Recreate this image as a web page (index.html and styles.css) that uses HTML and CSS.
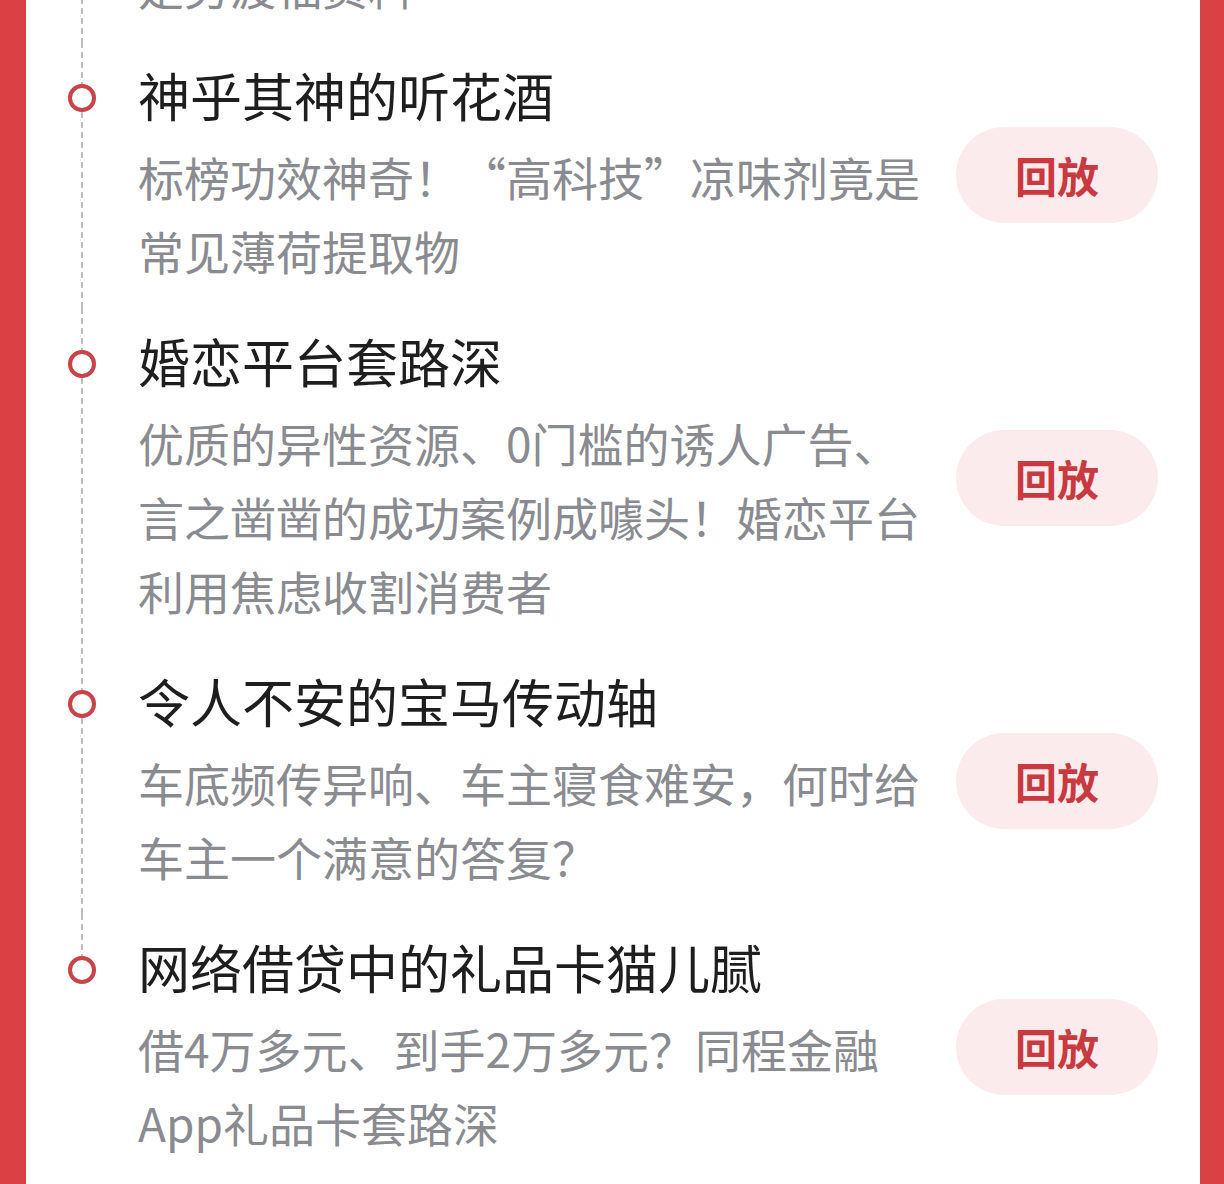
FILE: index.html
```html
<!DOCTYPE html>
<html lang="zh-CN">
<head>
<meta charset="utf-8">
<title>回放列表</title>
<link rel="stylesheet" href="styles.css">
</head>
<body>
<div class="card">
  <div class="list">
    <div class="item tail">
      <div class="rail"><span class="seg grow"></span></div>
      <div class="main">
        <div class="desc">是劳渡福资料</div>
      </div>
    </div>

    <div class="item">
      <div class="rail"><span class="seg top"></span><span class="dot"></span><span class="seg grow"></span></div>
      <div class="main">
        <div class="title">神乎其神的听花酒</div>
        <div class="desc">标榜功效神奇！“高科技”凉味剂竟是常见薄荷提取物</div>
      </div>
      <button class="replay">回放</button>
    </div>

    <div class="item">
      <div class="rail"><span class="seg top"></span><span class="dot"></span><span class="seg grow"></span></div>
      <div class="main">
        <div class="title">婚恋平台套路深</div>
        <div class="desc">优质的异性资源、0门槛的诱人广告、言之凿凿的成功案例成噱头！婚恋平台利用焦虑收割消费者</div>
      </div>
      <button class="replay">回放</button>
    </div>

    <div class="item">
      <div class="rail"><span class="seg top"></span><span class="dot"></span><span class="seg grow"></span></div>
      <div class="main">
        <div class="title">令人不安的宝马传动轴</div>
        <div class="desc">车底频传异响、车主寝食难安，何时给车主一个满意的答复？</div>
      </div>
      <button class="replay">回放</button>
    </div>

    <div class="item last">
      <div class="rail"><span class="seg top"></span><span class="dot"></span><span class="seg grow"></span></div>
      <div class="main">
        <div class="title">网络借贷中的礼品卡猫儿腻</div>
        <div class="desc">借4万多元、到手2万多元？同程金融App礼品卡套路深</div>
      </div>
      <button class="replay">回放</button>
    </div>
  </div>
</div>
</body>
</html>
```

FILE: styles.css
```css
html, body {
  height: 100%;
}
body {
  margin: 0;
  background: #d94145;
  font-family: "Noto Sans CJK SC", "Noto Sans", sans-serif;
  overflow: hidden;
}
.card {
  margin: 0 24px 0 26px;
  height: 100%;
  background: #ffffff;
  overflow: hidden;
}
.list {
  display: flex;
  flex-direction: column;
  margin-top: -52px;
}
.item {
  display: flex;
  align-items: center;
}
.rail {
  width: 112px;
  flex: none;
  align-self: stretch;
  display: flex;
  flex-direction: column;
  align-items: center;
}
.seg {
  width: 2px;
  background: repeating-linear-gradient(to bottom, #bdbdbd 0 6px, transparent 6px 10px);
}
.seg.top {
  height: 42px;
  flex: none;
}
.seg.grow {
  flex: 1;
}
.last .seg.grow {
  visibility: hidden;
}
.dot {
  width: 28px;
  height: 28px;
  box-sizing: border-box;
  border: 4px solid #c8434a;
  border-radius: 50%;
  background: #fff;
  flex: none;
}
.main {
  width: 792px;
  flex: none;
  padding: 21px 0 21px;
}
.tail .main {
  padding: 0 0 20px;
}
.title {
  font-size: 52px;
  line-height: 64px;
  color: #1e1e1e;
  margin-bottom: 12px;
}
.desc {
  font-size: 46px;
  line-height: 74px;
  color: #8a8b90;
}
.replay {
  flex: none;
  margin-left: 26px;
  width: 202px;
  height: 96px;
  border: none;
  border-radius: 48px;
  background: #fbebec;
  color: #c93a40;
  font-family: "Noto Sans CJK SC", sans-serif;
  font-size: 42px;
  font-weight: 700;
  line-height: 96px;
  padding: 0;
}
```
